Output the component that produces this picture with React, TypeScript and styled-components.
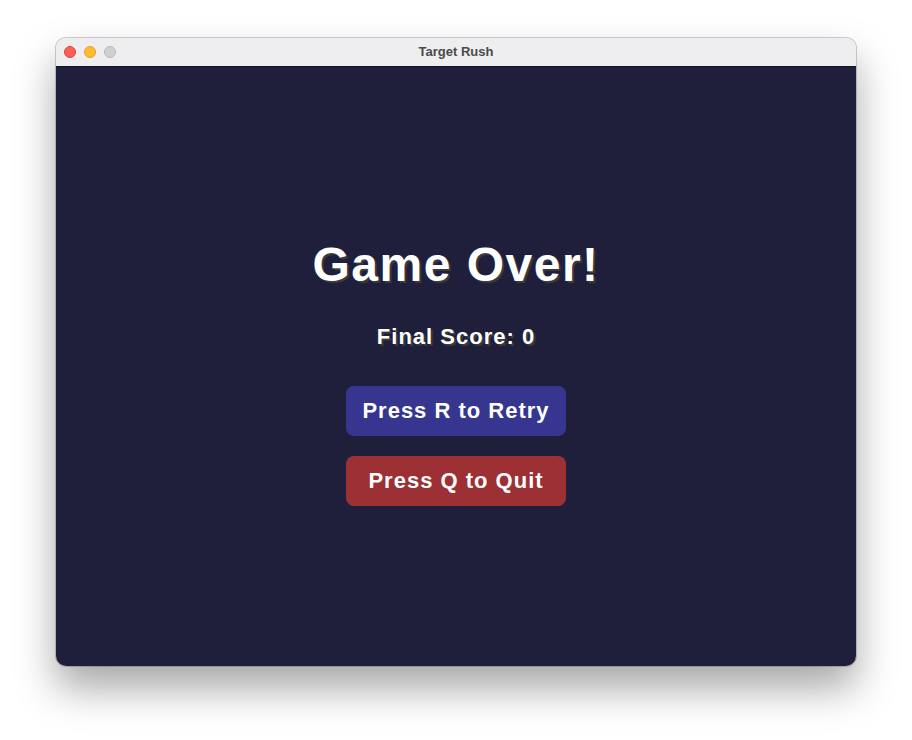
import React from "react";
import styled, { createGlobalStyle } from "styled-components";

const Global = createGlobalStyle`
  html, body { margin: 0; padding: 0; background: #ffffff; }
  body, h1, div { font-family: "Liberation Sans", Arial, Helvetica, sans-serif; }
`;

const Stage = styled.div`
  width: 912px;
  height: 740px;
  padding: 38px 56px 0;
  box-sizing: border-box;
`;

const Window = styled.div`
  width: 800px;
  height: 628px;
  border-radius: 10px;
  overflow: hidden;
  display: flex;
  flex-direction: column;
  box-shadow: 0 0 0 1px rgba(0,0,0,0.18), 0 22px 40px rgba(0,0,0,0.35);
`;

const TitleBar = styled.div`
  height: 28px;
  flex: none;
  background: #eeeef0;
  border-bottom: 1px solid #15152a;
  display: flex;
  align-items: center;
  position: relative;
  padding-left: 8px;
  gap: 8px;
`;

const Light = styled.span<{ $c: string; $b: string }>`
  width: 12px;
  height: 12px;
  border-radius: 50%;
  background: ${(p) => p.$c};
  box-sizing: border-box;
  border: 1px solid ${(p) => p.$b};
`;

const Title = styled.div`
  position: absolute;
  left: 0;
  right: 0;
  top: 6px;
  text-align: center;
  font-size: 13px;
  line-height: 15px;
  font-weight: 700;
  color: #4a4a4c;
  pointer-events: none;
`;

const Content = styled.div`
  flex: 1;
  background: #1f1f3c;
  display: flex;
  flex-direction: column;
  align-items: center;
  padding-top: 170px;
`;

const Heading = styled.h1`
  margin: 0;
  font-size: 48px;
  line-height: 56px;
  font-weight: 700;
  color: #ffffff;
  letter-spacing: 1.5px;
  text-shadow: 2px 2px 0 #3a3a3a;
`;

const Score = styled.div`
  margin-top: 29px;
  font-size: 22px;
  line-height: 30px;
  font-weight: 700;
  color: #ffffff;
  letter-spacing: 1px;
  text-shadow: 2px 2px 0 #3a3a3a;
`;

const Buttons = styled.div`
  margin-top: 34px;
  display: flex;
  flex-direction: column;
  gap: 20px;
`;

const Btn = styled.div<{ $bg: string }>`
  width: 220px;
  height: 50px;
  border-radius: 8px;
  background: ${(p) => p.$bg};
  color: #ffffff;
  font-size: 22px;
  font-weight: 700;
  letter-spacing: 1px;
  display: flex;
  align-items: center;
  justify-content: center;
`;

export default function App() {
  return (
    <>
      <Global />
      <Stage>
        <Window>
          <TitleBar>
            <Light $c="#fe5f57" $b="#e0443e" />
            <Light $c="#febc2e" $b="#dea123" />
            <Light $c="#d0d0d2" $b="#b8b8ba" />
            <Title>Target Rush</Title>
          </TitleBar>
          <Content>
            <Heading>Game Over!</Heading>
            <Score>Final Score: 0</Score>
            <Buttons>
              <Btn $bg="#363690">Press R to Retry</Btn>
              <Btn $bg="#9c3034">Press Q to Quit</Btn>
            </Buttons>
          </Content>
        </Window>
      </Stage>
    </>
  );
}
